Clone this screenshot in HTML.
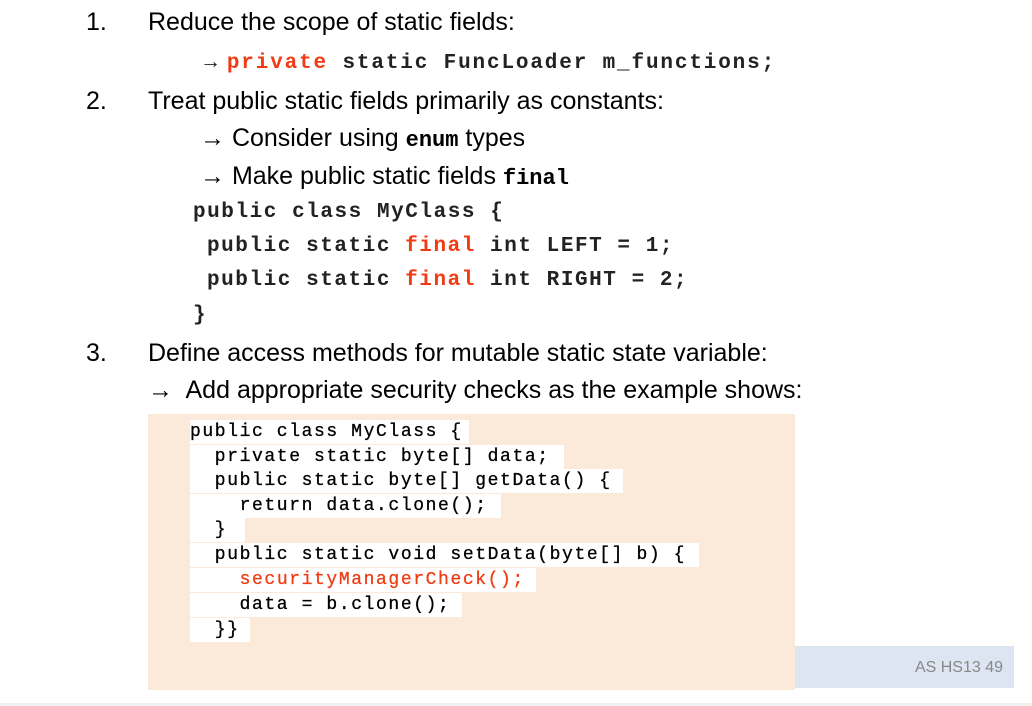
<!DOCTYPE html>
<html><head><meta charset="utf-8"><style>
body{margin:0;width:1032px;height:706px;background:#fff;position:relative;overflow:hidden;font-family:"Liberation Sans",Arial,sans-serif;color:#000}
.t{position:absolute;font-size:25px;white-space:pre;line-height:30px}
.c{position:absolute;font-family:"Liberation Mono",monospace;font-size:21px;letter-spacing:1.85px;white-space:pre;line-height:30px;font-weight:bold;color:#222}
.c2{letter-spacing:1.55px}
.r{color:#f03c14}
.k{position:absolute;font-family:"Liberation Mono",monospace;font-size:18px;letter-spacing:1.6px;white-space:pre;line-height:24px;background:#fff;color:#000;height:24px;padding-right:6px;-webkit-text-stroke:0.3px #000}
.k .r{-webkit-text-stroke:0.3px #f03c14}
.m{font-family:"Liberation Mono",monospace;font-weight:bold;font-size:22px}
</style></head><body>
<div class="t" style="left:86px;top:7px">1.</div>
<div class="t" style="left:148px;top:7px">Reduce the scope of static fields:</div>
<div class="c" style="left:200px;top:47px"><span style="font-family:'Liberation Sans';font-weight:normal;letter-spacing:0">→ </span><span class="r">private</span> static FuncLoader m_functions;</div>
<div class="t" style="left:86px;top:86px">2.</div>
<div class="t" style="left:148px;top:86px">Treat public static fields primarily as constants:</div>
<div class="t" style="left:200px;top:123px">→ Consider using <span class="m">enum</span> types</div>
<div class="t" style="left:200px;top:161px">→ Make public static fields <span class="m">final</span></div>
<div class="c c2" style="left:193px;top:198px">public class MyClass {</div>
<div class="c c2" style="left:207px;top:232px">public static <span class="r">final</span> int LEFT = 1;</div>
<div class="c c2" style="left:207px;top:266px">public static <span class="r">final</span> int RIGHT = 2;</div>
<div class="c c2" style="left:193px;top:301px">}</div>
<div class="t" style="left:86px;top:338px">3.</div>
<div class="t" style="left:148px;top:338px">Define access methods for mutable static state variable:</div>
<div class="t" style="left:148px;top:375px">→  Add appropriate security checks as the example shows:</div>
<div style="position:absolute;left:148px;top:414px;width:647px;height:276px;background:#fbe9da"></div>
<div class="k" style="left:190px;top:420px;width:279px;padding:0">public class MyClass {</div>
<div class="k" style="left:190px;top:445px;width:374px;padding:0">  private static byte[] data;</div>
<div class="k" style="left:190px;top:469px;width:433px;padding:0">  public static byte[] getData() {</div>
<div class="k" style="left:190px;top:494px;width:311px;padding:0">    return data.clone();</div>
<div class="k" style="left:190px;top:518px;width:55px;padding:0">  }</div>
<div class="k" style="left:190px;top:543px;width:509px;padding:0">  public static void setData(byte[] b) {</div>
<div class="k" style="left:190px;top:568px;width:346px;padding:0">    <span class="r">securityManagerCheck();</span></div>
<div class="k" style="left:190px;top:593px;width:272px;padding:0">    data = b.clone();</div>
<div class="k" style="left:190px;top:618px;width:60px;padding:0">  }}</div>
<div style="position:absolute;left:795px;top:646px;width:219px;height:42px;background:#dce5f1"></div>
<div style="position:absolute;left:795px;top:659px;width:208px;text-align:right;font-size:16px;color:#888">AS HS13 49</div>
<div style="position:absolute;left:0;top:703px;width:1032px;height:3px;background:#f0f0f0"></div>
</body></html>
